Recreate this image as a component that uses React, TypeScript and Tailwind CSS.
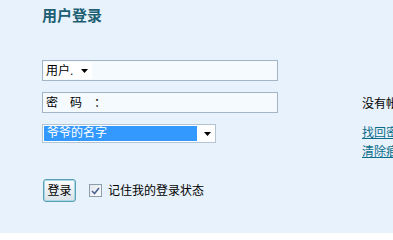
import React from "react";

const font = "font-['Liberation_Sans','Noto_Sans_CJK_SC',sans-serif]";

function Arrow() {
  return (
    <svg width="7" height="4" viewBox="0 0 7 4" className="shrink-0">
      <path d="M0 0h7L3.5 4z" fill="#000" />
    </svg>
  );
}

export default function App() {
  return (
    <div className={`w-[393px] h-[233px] overflow-hidden bg-[#e8f2fc] text-[12px] text-black ${font}`}>
      <div className="pl-[42px] pt-[7px]">
        <h1 className="text-[15px] leading-[17px] font-bold text-[#1d5f73]">用户登录</h1>
      </div>

      <div className="flex mt-[36px]">
        <div className="w-[320px] pl-[42px] shrink-0">
          {/* 用户名 */}
          <div className="w-[236px] h-[21px] border border-[#a3b5c4] bg-[#f5faff] flex items-center pl-[1px]">
            <div className="w-[48px] h-[17px] bg-white flex items-center justify-between pl-[2px] pr-[4px]">
              <span className="leading-[14px]">用户.</span>
              <Arrow />
            </div>
          </div>

          {/* 密码 */}
          <div className="mt-[11px] w-[236px] h-[21px] border border-[#a3b5c4] bg-[#f5faff] flex items-center pl-[3px]">
            <span className="leading-[14px] whitespace-pre">密　码　：</span>
          </div>

          {/* 安全问题 */}
          <div className="mt-[11px] w-[174px] h-[19px] border border-[#b3c5d3] bg-white flex items-center pl-[1px] pr-[4px]">
            <div className="w-[153px] h-[15px] bg-[#3399ff] text-white leading-[15px] pl-[3px]">爷爷的名字</div>
            <div className="flex-1 flex justify-end">
              <Arrow />
            </div>
          </div>

          <div className="mt-[36px] flex items-center">
            <button className="ml-[1px] w-[33px] h-[23px] rounded-[3px] border border-[#58a0b3] shadow-[inset_0_0_0_1px_#a9d6e2] bg-gradient-to-b from-[#fbfcfd] to-[#dbe4ea] leading-[14px] text-black">
              登录
            </button>
            <label className="ml-[13px] flex items-center">
              <span className="w-[13px] h-[13px] border border-[#8c9dab] bg-gradient-to-br from-[#e4e8ec] to-[#fbfbfc] flex items-center justify-center">
                <svg width="9" height="8" viewBox="0 0 9 8">
                  <path d="M1 4l2.5 2.5L8 1" fill="none" stroke="#4c6394" strokeWidth="1.6" />
                </svg>
              </span>
              <span className="ml-[6px] leading-[14px]">记住我的登录状态</span>
            </label>
          </div>
        </div>

        <div className="ml-[42px] pt-[37px] whitespace-nowrap">
          <p className="leading-[14px]">没有帐号？</p>
          <div className="mt-[13px] leading-[19px] text-[#0b6d8a] underline">
            <a className="block">找回密码</a>
            <a className="block">清除痕迹</a>
          </div>
        </div>
      </div>
    </div>
  );
}
